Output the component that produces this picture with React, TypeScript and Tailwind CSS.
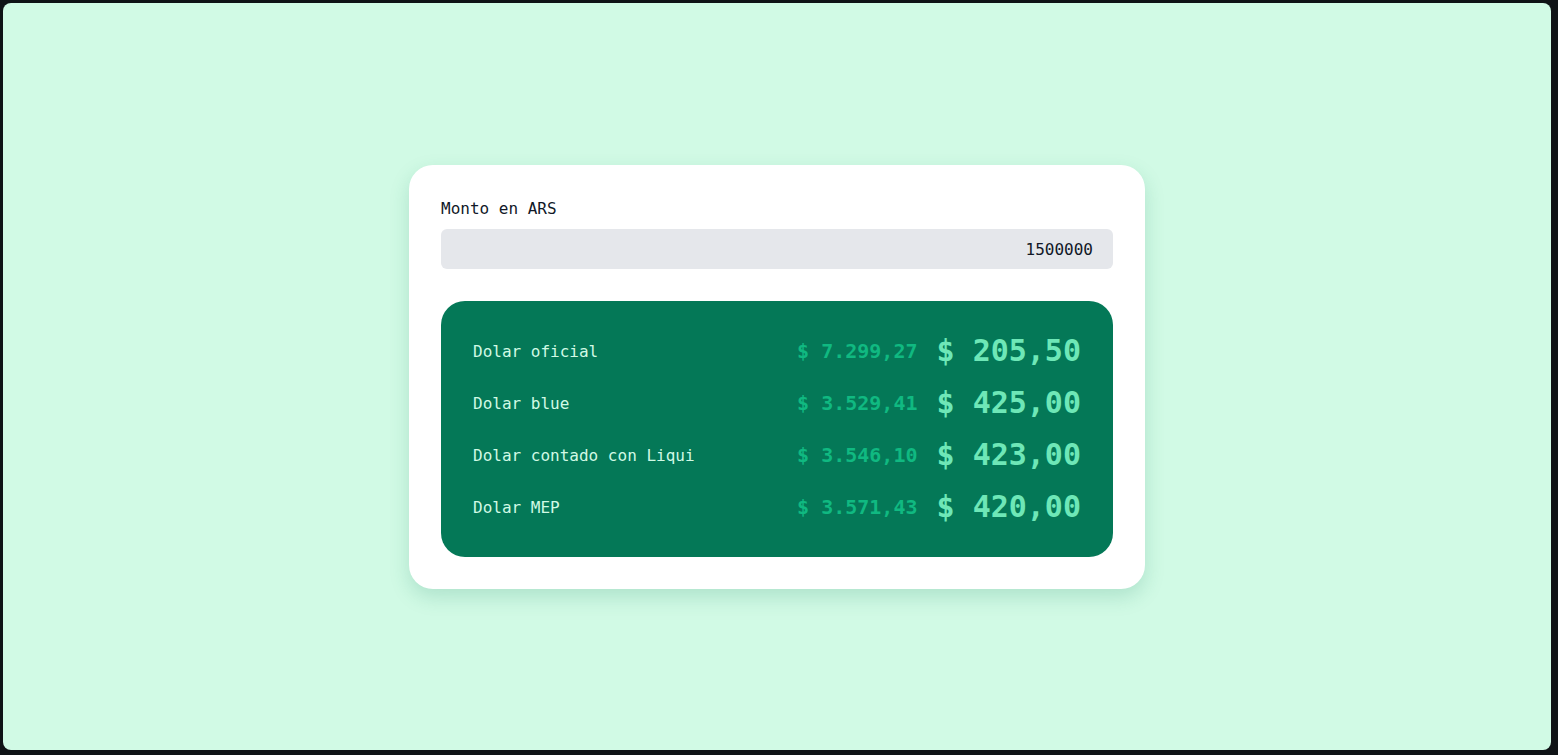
import React from "react";

const rows = [
  { name: "Dolar oficial", ars: "$ 7.299,27", usd: "205,50" },
  { name: "Dolar blue", ars: "$ 3.529,41", usd: "425,00" },
  { name: "Dolar contado con Liqui", ars: "$ 3.546,10", usd: "423,00" },
  { name: "Dolar MEP", ars: "$ 3.571,43", usd: "420,00" },
];

export default function App() {
  return (
    <div
      className="h-screen w-full bg-[#0f1316] pt-[3px] pl-[3px] pr-[7px] pb-[5px]"
      style={{ fontFamily: '"DejaVu Sans Mono", "Liberation Mono", monospace' }}
    >
      <div className="h-full w-full rounded-lg bg-[#d1fae5] flex items-center justify-center">
        <div className="w-[736px] rounded-3xl bg-white p-8 shadow-[0_8px_20px_rgba(16,120,87,0.18)]">
          <label className="block text-base leading-6 text-[#111827]">Monto en ARS</label>
          <div className="mt-2 h-10 rounded-md bg-[#e5e7eb] flex items-center justify-end pr-5 pt-0.5 text-base text-[#111827]">
            1500000
          </div>
          <div className="mt-8 rounded-3xl bg-[#047857] p-8 flex flex-col gap-4">
            {rows.map((r) => (
              <div key={r.name} className="flex items-center justify-between h-9">
                <span className="text-base text-[#d1fae5] pt-0.5">{r.name}</span>
                <div className="flex items-center gap-[19px]">
                  <span className="text-xl font-bold text-[#10b981]">{r.ars}</span>
                  <span className="text-3xl font-bold text-[#6ee7b7]">$ {r.usd}</span>
                </div>
              </div>
            ))}
          </div>
        </div>
      </div>
    </div>
  );
}
